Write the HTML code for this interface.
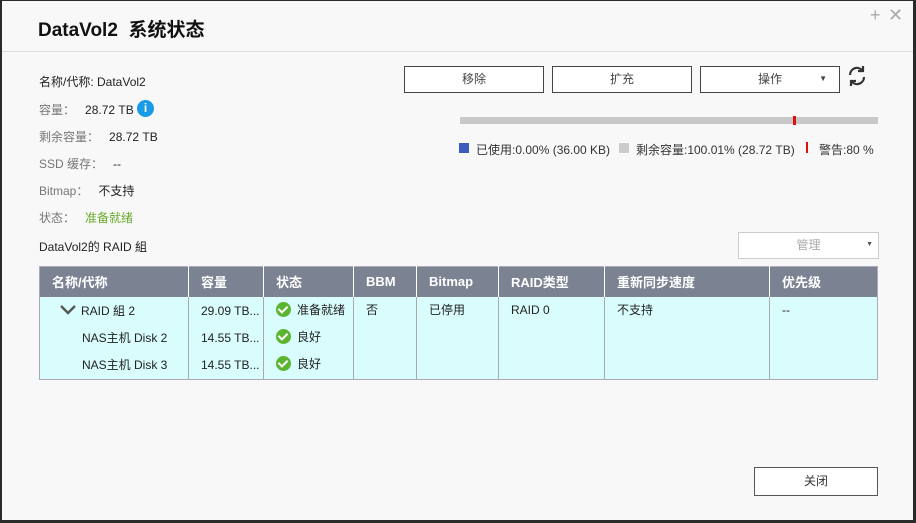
<!DOCTYPE html>
<html><head><meta charset="utf-8"><style>
*{margin:0;padding:0;box-sizing:border-box}
body{width:916px;height:523px;background:#2a2a2a;font-family:"Liberation Sans","Noto Sans CJK SC",sans-serif;font-size:12px;color:#222;position:relative;overflow:hidden}
.win{position:absolute;left:2px;top:1px;width:911px;height:519px;background:#f8f8f8}
.a{position:absolute;white-space:nowrap}
.btn{position:absolute;border:1px solid #444;background:#fff;text-align:center;line-height:24px;color:#444;font-size:12px}
.g{color:#777}
table{position:absolute;left:39px;top:266px;width:839px;border-collapse:collapse;border:1px solid #aab}
th{background:#7b8393;color:#fff;font-weight:bold;text-align:left;height:30px;padding-left:12px;font-size:13px;border-left:1px solid #fff}
td{background:#d9fcfc;vertical-align:top;padding-left:12px;border-left:1px solid #aaa;font-size:12px;line-height:27px}
.ok{display:inline-block;width:15px;height:15px;border-radius:50%;background:#5cb531;vertical-align:-3px;margin-right:6px;position:relative}
.ok:after{content:"";position:absolute;left:4px;top:2px;width:4px;height:7px;border:solid #fff;border-width:0 2px 2px 0;transform:rotate(45deg)}
</style></head><body><div class="win">
<div class="a" style="left:36px;top:14px;font-size:19px;font-weight:bold;color:#111">DataVol2&nbsp; 系统状态</div>
<div class="a" style="left:868px;top:4px;font-size:18px;color:#aaa">+</div>
<div class="a" style="left:886px;top:4px;font-size:18px;color:#aaa">✕</div>
<div style="position:absolute;left:0;top:50px;width:911px;height:1px;background:#ddd"></div>
<div class="a" style="left:37px;top:72px">名称/代称: DataVol2</div>
<div class="a g" style="left:37px;top:100px">容量：&nbsp;&nbsp; <span style="color:#222">28.72 TB</span></div>
<div class="a" style="left:135px;top:99px;width:17px;height:17px;border-radius:50%;background:#1a9be6;color:#fff;text-align:center;font-weight:bold;line-height:17px">i</div>
<div class="a g" style="left:37px;top:127px">剩余容量：&nbsp;&nbsp; <span style="color:#222">28.72 TB</span></div>
<div class="a g" style="left:37px;top:154px">SSD 缓存：&nbsp;&nbsp; <span style="color:#222">--</span></div>
<div class="a g" style="left:37px;top:181px">Bitmap：&nbsp;&nbsp; <span style="color:#222">不支持</span></div>
<div class="a g" style="left:37px;top:208px">状态：&nbsp;&nbsp; <span style="color:#6aaa2a">准备就绪</span></div>
<div class="a" style="left:37px;top:237px">DataVol2的 RAID 組</div>
<div class="btn" style="left:402px;top:65px;width:140px;height:27px">移除</div>
<div class="btn" style="left:550px;top:65px;width:140px;height:27px">扩充</div>
<div class="btn" style="left:698px;top:65px;width:140px;height:27px">操作<span style="position:absolute;right:12px;font-size:8px">▼</span></div>
<svg class="a" style="left:844px;top:63px" width="22" height="24" viewBox="0 0 22 24" fill="none" stroke="#333" stroke-width="2.2"><path d="M4 11a7 7 0 0 1 12-5"/><path d="M17 2v5h-5"/><path d="M18 13a7 7 0 0 1-12 5"/><path d="M5 22v-5h5"/></svg>
<div class="a" style="left:458px;top:116px;width:418px;height:7px;background:#c8c8c8"></div>
<div class="a" style="left:791px;top:115px;width:3px;height:9px;background:#e01010"></div>
<div class="a" style="left:457px;top:142px;width:10px;height:10px;background:#3e5cc0"></div>
<div class="a" style="left:474px;top:140px;color:#333">已使用:0.00% (36.00 KB)</div>
<div class="a" style="left:617px;top:142px;width:10px;height:10px;background:#ccc"></div>
<div class="a" style="left:634px;top:140px;color:#333">剩余容量:100.01% (28.72 TB)</div>
<div class="a" style="left:804px;top:141px;width:2px;height:11px;background:#e01010"></div>
<div class="a" style="left:817px;top:140px;color:#333">警告:80 %</div>
<div class="btn" style="left:736px;top:231px;width:141px;height:27px;border-color:#ccc;color:#aaa">管理<span style="position:absolute;right:5px;font-size:7px;color:#555">▼</span></div>
</div>
<table>
<tr><th style="width:149px;border-left:none">名称/代称</th><th style="width:75px">容量</th><th style="width:90px">状态</th><th style="width:63px">BBM</th><th style="width:82px">Bitmap</th><th style="width:106px">RAID类型</th><th style="width:165px">重新同步速度</th><th>优先级</th></tr>
<tr><td style="border-left:none;height:83px;padding-left:20px;padding-top:1px"><svg width="16" height="10" viewBox="0 0 16 10" style="vertical-align:0;margin-right:5px"><path d="M1 1l7 7 7-7" fill="none" stroke="#555" stroke-width="2.4"/></svg>RAID 組 2<br><span style="padding-left:22px">NAS主机 Disk 2</span><br><span style="padding-left:22px">NAS主机 Disk 3</span></td>
<td style="padding-top:1px">29.09 TB...<br>14.55 TB...<br>14.55 TB...</td>
<td style="line-height:27px"><span class="ok"></span>准备就绪<br><span class="ok"></span>良好<br><span class="ok"></span>良好</td>
<td>否</td><td>已停用</td><td>RAID 0</td><td>不支持</td><td>--</td></tr>
</table>
<div class="btn" style="left:754px;top:467px;width:124px;height:29px;line-height:27px;color:#333;border-color:#555">关闭</div>
</body></html>
